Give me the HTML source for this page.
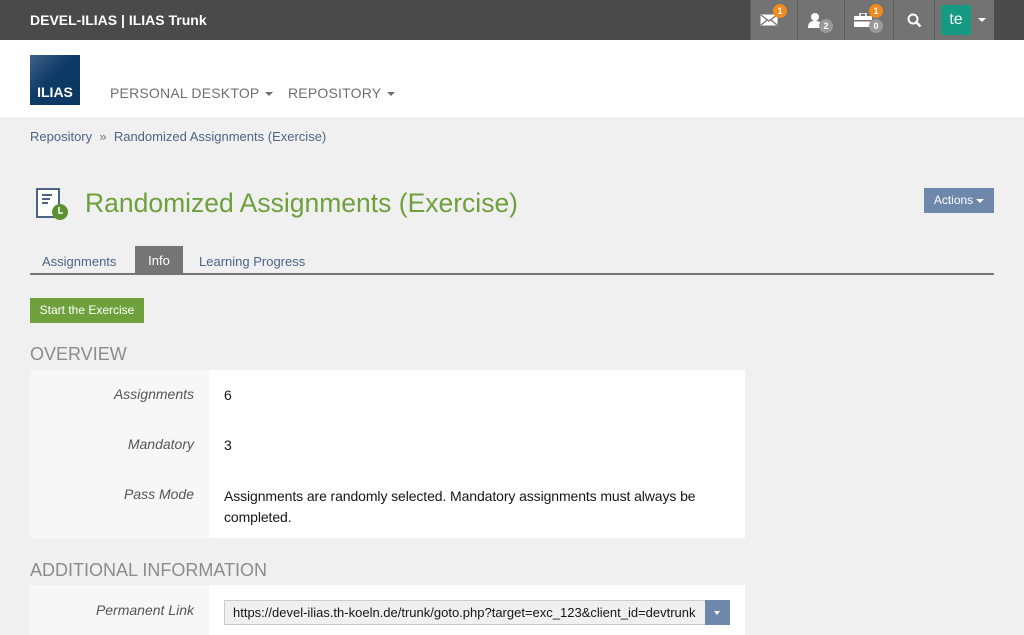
<!DOCTYPE html>
<html><head><meta charset="utf-8"><style>
*{box-sizing:border-box;margin:0;padding:0}
body{width:1024px;height:635px;overflow:hidden;background:#f0f0f0;font-family:"Liberation Sans",sans-serif;font-size:14px;color:#161616;position:relative}
.a{position:absolute}
.top{left:0;top:0;width:1024px;height:40px;background:#4a4a4a}
.ib{top:0;height:40px;background:#737373;border-left:1px solid #5c5c5c}
.badge{position:absolute;border-radius:50%;width:14px;height:14px;font-size:9px;font-weight:bold;color:#fff;text-align:center;line-height:14px}
.hdr{left:0;top:40px;width:1024px;height:77px;background:#fff}
.nav{top:85px;font-size:14px;color:#6f6f6f;letter-spacing:0.2px}
.caret{display:inline-block;width:0;height:0;border-left:4px solid transparent;border-right:4px solid transparent;border-top:4px solid currentColor;vertical-align:middle;margin-left:6px}
.lbl{font-style:italic;color:#555;text-align:right;width:164px;left:30px}
</style></head><body>
<div class="a top"></div>
<div class="a" style="left:30px;top:12px;color:#fff;font-weight:bold;font-size:14px">DEVEL-ILIAS | ILIAS Trunk</div>
<div class="a ib" style="left:750px;width:47px"><svg class="a" style="left:9px;top:14px" width="18" height="12"><rect x="0.5" y="0.5" width="17" height="11" fill="#fff"/><path d="M1 1l8 6 8-6M1 11l6-5M17 11l-6-5" stroke="#737373" stroke-width="1.3" fill="none"/></svg><div class="badge" style="left:22px;top:4px;background:#f28a1a">1</div></div>
<div class="a ib" style="left:797px;width:47px"><svg class="a" style="left:10px;top:12px" width="16" height="16"><circle cx="7" cy="5" r="4" fill="#fff"/><path d="M0 16c0-6 3-7 7-7s7 1 7 7z" fill="#fff"/></svg><div class="badge" style="left:21px;top:19px;background:#999">2</div></div>
<div class="a ib" style="left:844px;width:49px"><svg class="a" style="left:9px;top:13px" width="18" height="14"><rect x="0" y="3" width="18" height="11" rx="1" fill="#fff"/><rect x="6" y="0" width="6" height="4" fill="none" stroke="#fff" stroke-width="1.5"/><rect x="0" y="7" width="18" height="1.5" fill="#737373"/></svg><div class="badge" style="left:24px;top:4px;background:#f28a1a">1</div><div class="badge" style="left:24px;top:19px;background:#999">0</div></div>
<div class="a ib" style="left:893px;width:41px"><svg class="a" style="left:13px;top:13px" width="15" height="15"><circle cx="6" cy="6" r="4.5" stroke="#fff" stroke-width="2" fill="none"/><path d="M9.5 9.5l4 4" stroke="#fff" stroke-width="2.5"/></svg></div>
<div class="a ib" style="left:934px;width:60px"><div class="a" style="left:6px;top:5px;width:30px;height:30px;background:#179a82;color:#fff;font-size:16px;text-align:center;line-height:29px">te</div><div class="a" style="left:43px;top:18px;border-left:4px solid transparent;border-right:4px solid transparent;border-top:4px solid #fff"></div></div>
<div class="a hdr"></div>
<div class="a" style="left:30px;top:55px;width:50px;height:50px;background:linear-gradient(135deg,#3f6188 0%,#0e3a66 45%,#0b3763 100%);color:#fff;font-weight:bold;font-size:14px;text-align:center;padding-top:29px">ILIAS</div>
<div class="a nav" style="left:110px">PERSONAL DESKTOP<span class="caret"></span></div>
<div class="a nav" style="left:288px">REPOSITORY<span class="caret"></span></div>
<div class="a" style="left:30px;top:129px;font-size:13px;color:#4c6586">Repository &nbsp;<span style="color:#777">»</span>&nbsp; Randomized Assignments (Exercise)</div>
<svg class="a" style="left:36px;top:188px" width="34" height="34"><rect x="1" y="1" width="22" height="28" fill="#fff" stroke="#4c6586" stroke-width="2"/><path d="M6 7h10M6 11h8M6 15h6" stroke="#4c6586" stroke-width="2"/><circle cx="24" cy="24" r="8" fill="#5b9030"/><path d="M23 19v6h4" stroke="#fff" stroke-width="1.5" fill="none"/></svg>
<div class="a" style="left:85px;top:188px;font-size:26.5px;color:#6ea03c">Randomized Assignments (Exercise)</div>
<div class="a" style="left:924px;top:188px;width:70px;height:25px;background:#6d88aa;color:#fff;font-size:12px;text-align:center;line-height:25px">Actions<span class="caret" style="margin-left:3px"></span></div>
<div class="a" style="left:42px;top:254px;font-size:13px;color:#4c6586">Assignments</div>
<div class="a" style="left:135px;top:246px;width:48px;height:27px;background:#757575;color:#fff;font-size:13px;text-align:center;line-height:30px">Info</div>
<div class="a" style="left:199px;top:254px;font-size:13px;color:#4c6586">Learning Progress</div>
<div class="a" style="left:30px;top:273px;width:964px;height:2px;background:#757575"></div>
<div class="a" style="left:30px;top:298px;width:114px;height:25px;background:#6ea03c;color:#fff;font-size:12px;text-align:center;line-height:25px">Start the Exercise</div>
<div class="a" style="left:30px;top:344px;font-size:18px;color:#8c8c8c">OVERVIEW</div>
<div class="a" style="left:30px;top:370px;width:715px;height:168px;background:#fff"></div>
<div class="a" style="left:30px;top:370px;width:179px;height:168px;background:#f7f7f7"></div>
<div class="a lbl" style="top:386px">Assignments</div><div class="a" style="left:224px;top:387px">6</div>
<div class="a lbl" style="top:436px">Mandatory</div><div class="a" style="left:224px;top:437px">3</div>
<div class="a lbl" style="top:486px">Pass Mode</div><div class="a" style="left:224px;top:486px;width:515px;line-height:21px;letter-spacing:-0.1px">Assignments are randomly selected. Mandatory assignments must always be completed.</div>
<div class="a" style="left:30px;top:560px;font-size:18px;color:#8c8c8c">ADDITIONAL INFORMATION</div>
<div class="a" style="left:30px;top:585px;width:715px;height:50px;background:#fff"></div>
<div class="a" style="left:30px;top:585px;width:179px;height:50px;background:#f7f7f7"></div>
<div class="a lbl" style="top:602px">Permanent Link</div>
<div class="a" style="left:224px;top:600px;width:482px;height:25px;background:#f0f0f0;border:1px solid #ccc;font-size:13px;line-height:23px;padding-left:8px;overflow:hidden;white-space:nowrap">https://devel-ilias.th-koeln.de/trunk/goto.php?target=exc_123&amp;client_id=devtrunk</div>
<div class="a" style="left:705px;top:600px;width:25px;height:25px;background:#6d88aa"><div class="a" style="left:9px;top:11px;border-left:3.5px solid transparent;border-right:3.5px solid transparent;border-top:4px solid #fff"></div></div>
</body></html>
